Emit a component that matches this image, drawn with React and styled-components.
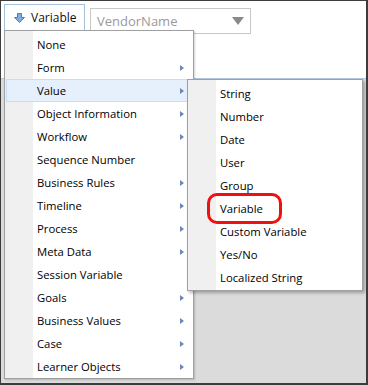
import React from 'react';
import styled, { createGlobalStyle } from 'styled-components';

const GlobalStyle = createGlobalStyle`
  html, body {
    margin: 0;
    padding: 0;
    background: #fff;
  }
  body {
    font-family: "Open Sans", "Noto Sans", sans-serif;
  }
`;

const Frame = styled.div`
  position: relative;
  width: 368px;
  height: 385px;
  box-sizing: border-box;
  border-style: solid;
  border-color: #3c3c3c;
  border-width: 1px 2px 2px 1px;
  background: #dbdbdb;
  display: flex;
  flex-direction: column;
  overflow: hidden;
`;

const Toolbar = styled.div`
  height: 78px;
  box-sizing: border-box;
  background: #fff;
  border-bottom: 1px solid #b3c7de;
  display: flex;
  align-items: flex-start;
  gap: 5px;
  padding: 3px 0 0 3px;
`;

const ButtonWrap = styled.div`
  position: relative;
`;

const DropButton = styled.div`
  width: 81px;
  height: 26px;
  box-sizing: border-box;
  border: 1px solid #a5bfdc;
  border-bottom: none;
  background: #fff;
  display: flex;
  align-items: center;
  gap: 6px;
  padding-left: 9px;
  font-size: 12px;
  color: #111;
`;

const Select = styled.div`
  margin-top: 4px;
  width: 161px;
  height: 26px;
  box-sizing: border-box;
  border: 1px solid #c8c8c8;
  display: flex;
  align-items: center;
  justify-content: space-between;
  padding: 0 6px 0 6px;
  font-size: 13px;
  color: #9a9a9a;
`;

const Caret = styled.span`
  width: 0;
  height: 0;
  border-left: 6px solid transparent;
  border-right: 6px solid transparent;
  border-top: 8px solid #8a8a8a;
`;

const Menu = styled.div`
  position: absolute;
  z-index: ${p => (p.$sub ? 3 : 2)};
  left: ${p => (p.$sub ? '180px' : '0')};
  top: ${p => (p.$sub ? '-1px' : '26px')};
  width: ${p => p.$width}px;
  box-sizing: border-box;
  border: 1px solid #a0a0a0;
  padding: 2px 2px ${p => (p.$sub ? '1px' : '0')} 2px;
  background: linear-gradient(to right, #f0f0f0 28px, #fff 28px);
  box-shadow: ${p => (p.$sub ? '2px 2px 3px rgba(0,0,0,0.28)' : '1px 1px 2px rgba(0,0,0,0.18)')};
`;

const Item = styled.div`
  position: ${p => (p.$active ? 'relative' : 'static')};
  height: 23px;
  box-sizing: border-box;
  display: flex;
  align-items: center;
  margin: 0 -1px;
  padding-left: 30px;
  font-size: 11.3px;
  color: #000;
  white-space: nowrap;
  background: ${p => (p.$active ? '#e5f0fc' : 'transparent')};
  border: 1px solid ${p => (p.$active ? '#c9ddf4' : 'transparent')};
`;

const Arrow = styled.span`
  margin-left: auto;
  margin-right: 7px;
  width: 0;
  height: 0;
  border-top: 3.5px solid transparent;
  border-bottom: 3.5px solid transparent;
  border-left: 4px solid #6b87b8;
`;

const Callout = styled.div`
  position: absolute;
  z-index: 5;
  left: 206px;
  top: 192px;
  width: 75px;
  height: 31px;
  box-sizing: border-box;
  border: 3px solid #f01010;
  border-radius: 10px;
`;

const DownIcon = () => (
  <svg width="11" height="10" viewBox="0 0 11 10">
    <path d="M3.5 0.5 H7.5 V4.5 H10.5 L5.5 9.5 L0.5 4.5 H3.5 Z" fill="#7eaee8" stroke="#3f7fd0" strokeWidth="1" />
  </svg>
);

const mainItems = [
  ['None', false],
  ['Form', true],
  ['Value', true],
  ['Object Information', true],
  ['Workflow', true],
  ['Sequence Number', false],
  ['Business Rules', true],
  ['Timeline', true],
  ['Process', true],
  ['Meta Data', true],
  ['Session Variable', false],
  ['Goals', true],
  ['Business Values', true],
  ['Case', true],
  ['Learner Objects', true],
];

const valueItems = [
  'String',
  'Number',
  'Date',
  'User',
  'Group',
  'Variable',
  'Custom Variable',
  'Yes/No',
  'Localized String',
];

export default function App() {
  return (
    <>
      <GlobalStyle />
      <Frame>
        <Toolbar>
          <ButtonWrap>
            <DropButton>
              <DownIcon />
              Variable
            </DropButton>
            <Menu $width={190}>
              {mainItems.map(([label, sub]) => (
                <Item key={label} $active={label === 'Value'}>
                  {label}
                  {sub && <Arrow />}
                  {label === 'Value' && (
                    <Menu $sub $width={176}>
                      {valueItems.map(v => (
                        <Item key={v}>{v}</Item>
                      ))}
                    </Menu>
                  )}
                </Item>
              ))}
            </Menu>
          </ButtonWrap>
          <Select>
            VendorName
            <Caret />
          </Select>
        </Toolbar>
        <Callout />
      </Frame>
    </>
  );
}
